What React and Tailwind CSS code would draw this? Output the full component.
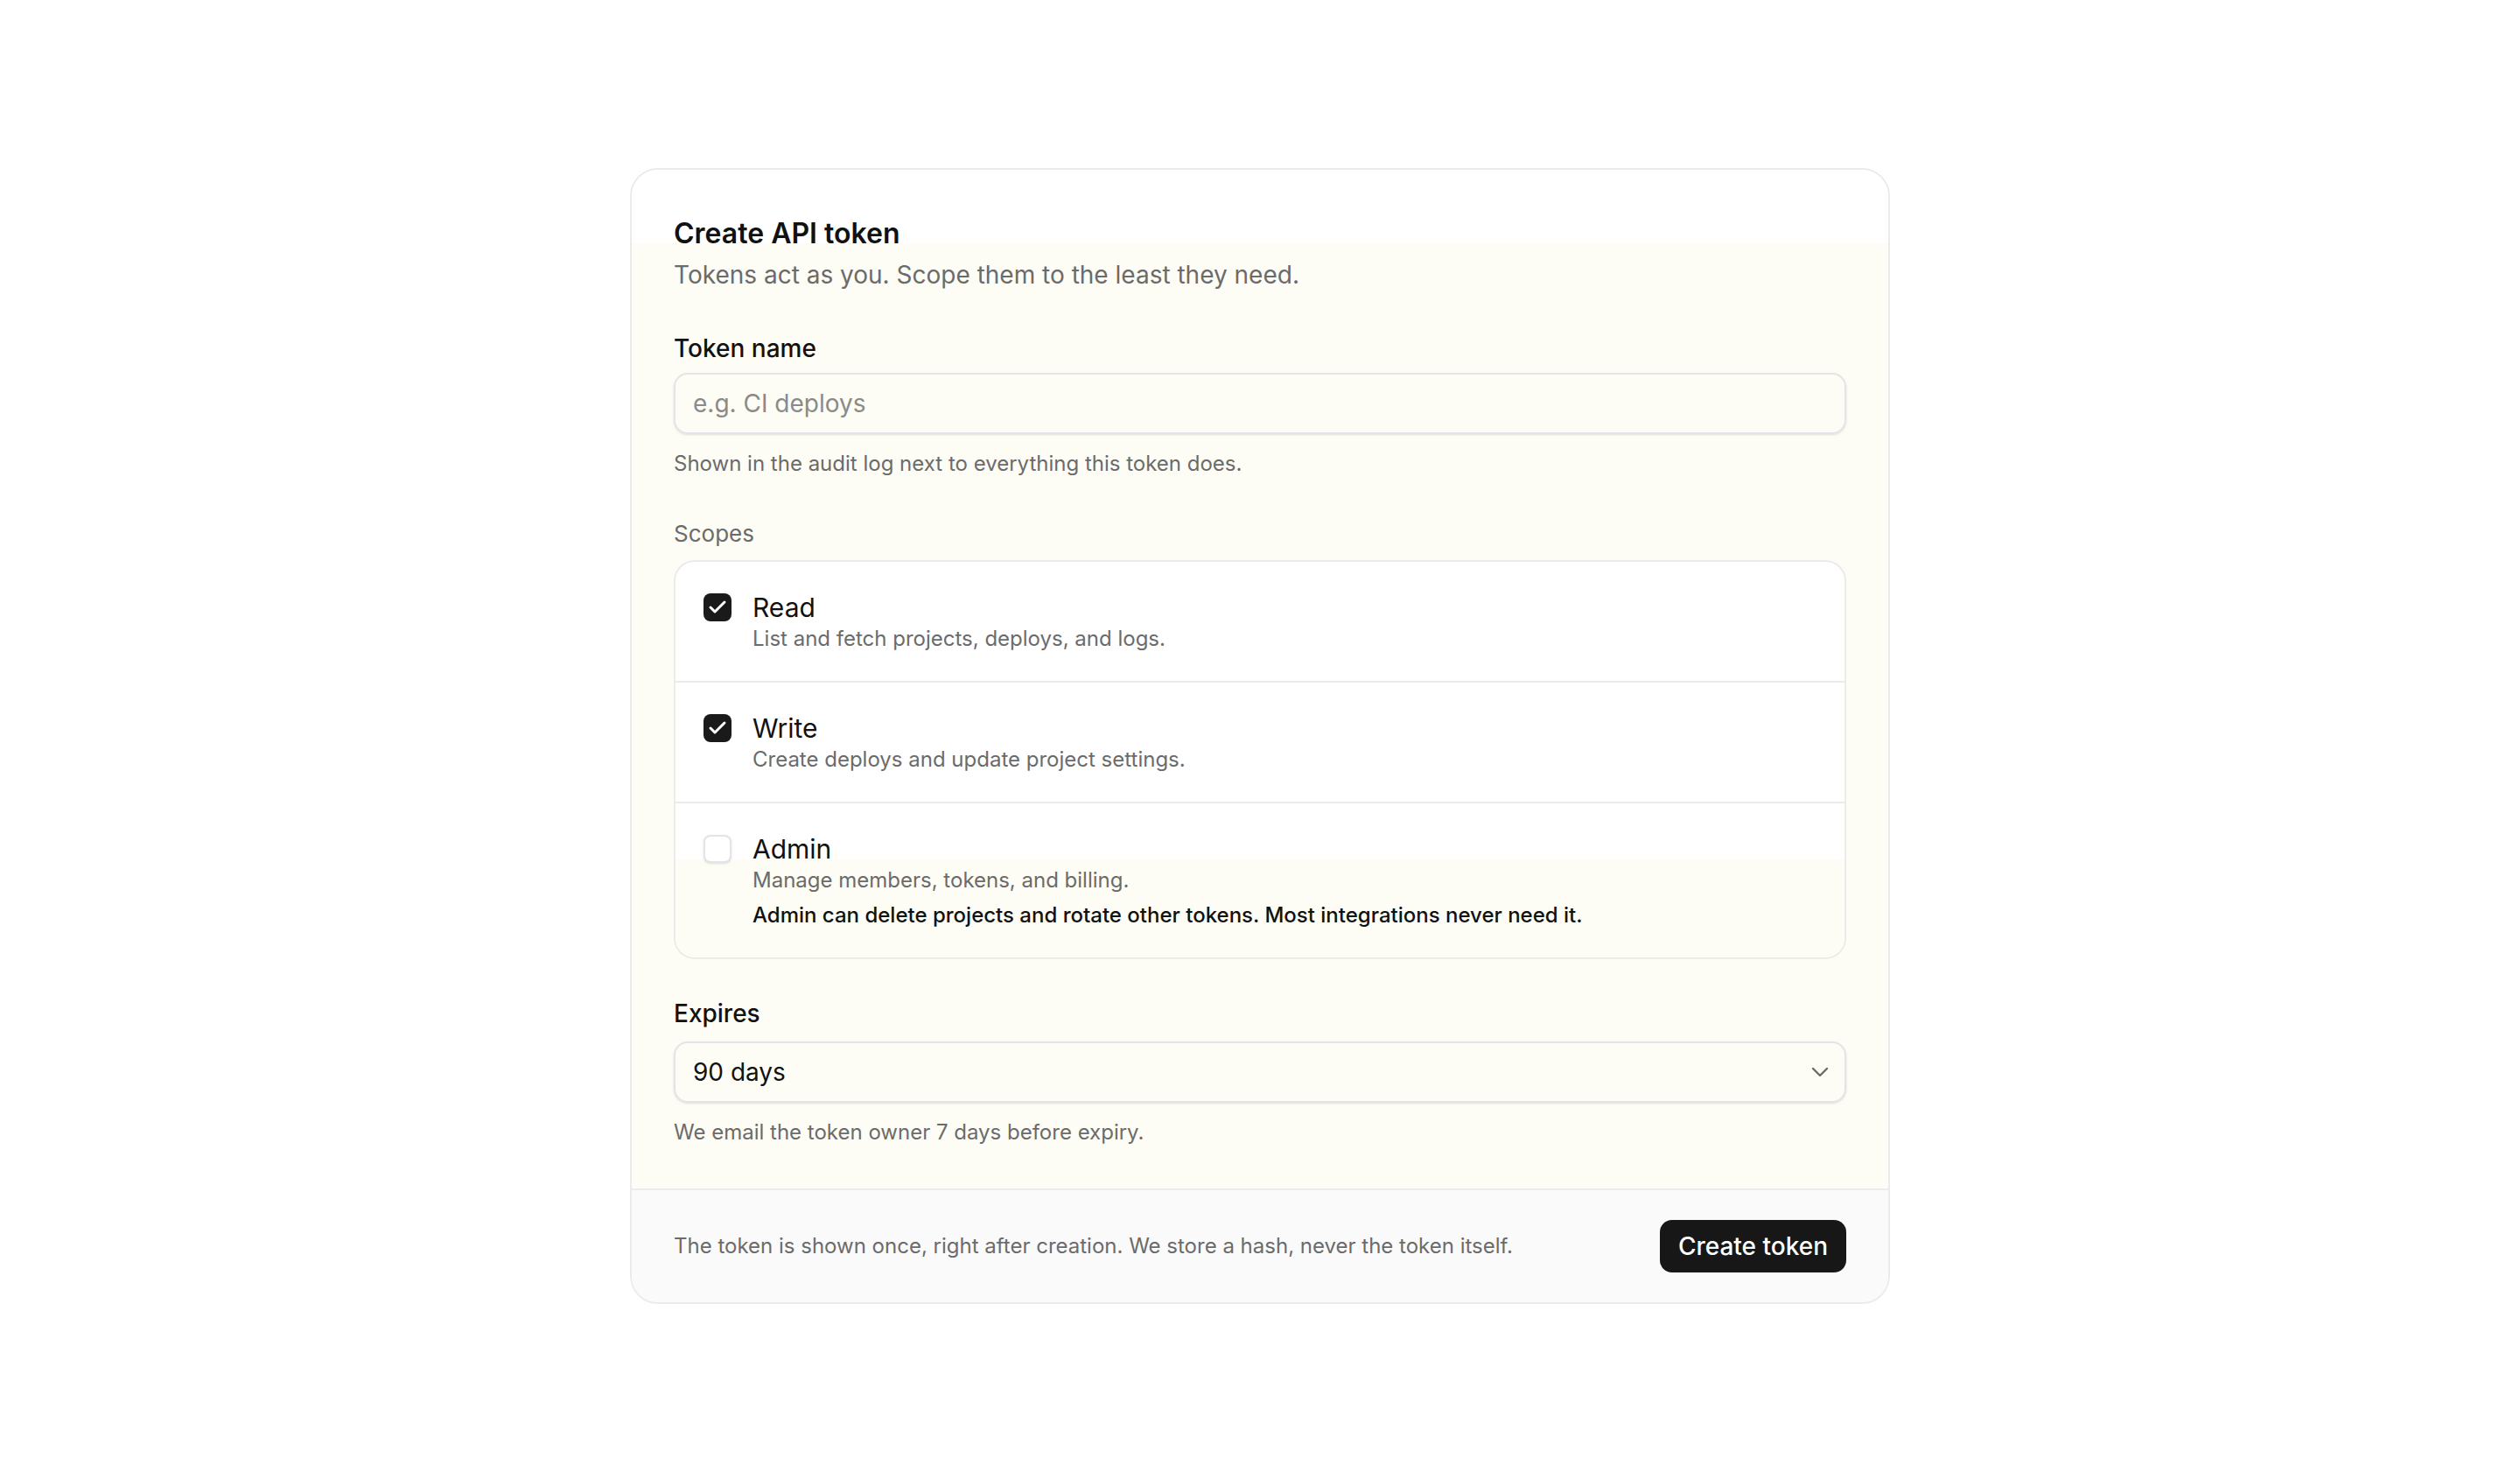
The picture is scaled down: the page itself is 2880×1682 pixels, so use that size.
import React, { useState } from "react"
import { Check, ChevronDown } from "lucide-react"

const scopes = [
  { id: "read", label: "Read", desc: "List and fetch projects, deploys, and logs." },
  { id: "write", label: "Write", desc: "Create deploys and update project settings." },
  {
    id: "admin",
    label: "Admin",
    desc: "Manage members, tokens, and billing.",
    warning: "Admin can delete projects and rotate other tokens. Most integrations never need it.",
  },
]

function Checkbox({ checked, onChange }) {
  return (
    <button
      type="button"
      onClick={onChange}
      className={`w-8 h-8 flex-shrink-0 rounded-[8px] flex items-center justify-center ${
        checked ? "bg-[#1a1a1a]" : "bg-white border-2 border-[#e4e4e7] shadow-sm"
      }`}
    >
      {checked && <Check className="w-6 h-6 text-white" strokeWidth={3} />}
    </button>
  )
}

export default function App() {
  const [selected, setSelected] = useState({ read: true, write: true, admin: false })

  const toggle = (id) => setSelected((s) => ({ ...s, [id]: !s[id] }))

  return (
    <div
      className="min-h-screen bg-white flex items-center justify-center text-[#111111]"
      style={{ fontFamily: "Inter, 'Noto Sans', sans-serif" }}
    >
      <div className="w-[1440px] rounded-[32px] border-2 border-[#ebebeb] overflow-hidden bg-[#fdfdf5]">
        {/* Header */}
        <div className="h-[84px] bg-white px-12 pt-[49px]">
          <h1 className="text-[32px] leading-[48px] font-semibold">Create API token</h1>
        </div>

        {/* Body */}
        <div className="px-12 pb-12">
          <p className="mt-4 text-[28px] leading-[40px] text-[#6b6b6b]">
            Tokens act as you. Scope them to the least they need.
          </p>

          <label className="block mt-[44px] text-[28px] leading-[40px] font-medium">Token name</label>
          <input
            type="text"
            placeholder="e.g. CI deploys"
            className="mt-2 w-full h-[70px] px-5 rounded-2xl border-2 border-[#e4e4e7] bg-transparent shadow-sm text-[28px] placeholder:text-[#8a8a8a] outline-none"
          />
          <p className="mt-[18px] text-[24px] leading-[32px] text-[#6b6b6b]">
            Shown in the audit log next to everything this token does.
          </p>

          <div className="mt-[46px] text-[26px] leading-[36px] text-[#6b6b6b]">Scopes</div>
          <div className="mt-3 rounded-3xl border-2 border-[#ebebeb] bg-white overflow-hidden">
            {scopes.map((scope, i) =>
              scope.warning ? (
                <div key={scope.id} className={`bg-[#fdfdf5] ${i > 0 ? "border-t-2 border-[#ebebeb]" : ""}`}>
                  <div className="h-[64px] bg-white px-8 pt-8">
                    <div className="flex items-center gap-6 h-10">
                      <Checkbox checked={selected[scope.id]} onChange={() => toggle(scope.id)} />
                      <span className="text-[30px] leading-[40px]">{scope.label}</span>
                    </div>
                  </div>
                  <div className="pl-[88px] pr-8 pb-8 pt-2">
                    <div className="text-[24px] leading-[32px] text-[#6b6b6b]">{scope.desc}</div>
                    <div className="mt-2 text-[24px] leading-[32px] font-medium text-[#111111]">{scope.warning}</div>
                  </div>
                </div>
              ) : (
                <div key={scope.id} className={`px-8 py-8 ${i > 0 ? "border-t-2 border-[#ebebeb]" : ""}`}>
                  <div className="flex items-center gap-6 h-10">
                    <Checkbox checked={selected[scope.id]} onChange={() => toggle(scope.id)} />
                    <span className="text-[30px] leading-[40px]">{scope.label}</span>
                  </div>
                  <div className="pl-14 text-[24px] leading-[32px] text-[#6b6b6b]">{scope.desc}</div>
                </div>
              )
            )}
          </div>

          <label className="block mt-[42px] text-[28px] leading-[40px] font-medium">Expires</label>
          <div className="mt-3 relative">
            <select
              defaultValue="90 days"
              className="appearance-none w-full h-[70px] pl-5 pr-16 rounded-2xl border-2 border-[#e4e4e7] bg-transparent shadow-sm text-[28px] text-[#111111] outline-none"
            >
              <option>30 days</option>
              <option>90 days</option>
              <option>1 year</option>
              <option>Never</option>
            </select>
            <ChevronDown
              className="absolute right-[14px] top-1/2 -translate-y-1/2 w-8 h-8 text-[#6b6b6b] pointer-events-none"
              strokeWidth={1.8}
            />
          </div>
          <p className="mt-[18px] text-[24px] leading-[32px] text-[#6b6b6b]">We email the token owner 7 days before expiry.</p>
        </div>

        {/* Footer */}
        <div className="flex items-center justify-between gap-8 px-12 py-[34px] border-t-2 border-[#ebebeb] bg-[#fafafa]">
          <p className="text-[24px] leading-[32px] text-[#6b6b6b]">
            The token is shown once, right after creation. We store a hash, never the token itself.
          </p>
          <button className="h-[60px] px-[21px] rounded-[14px] bg-[#171717] text-white text-[28px] font-medium">
            Create token
          </button>
        </div>
      </div>
    </div>
  )
}
